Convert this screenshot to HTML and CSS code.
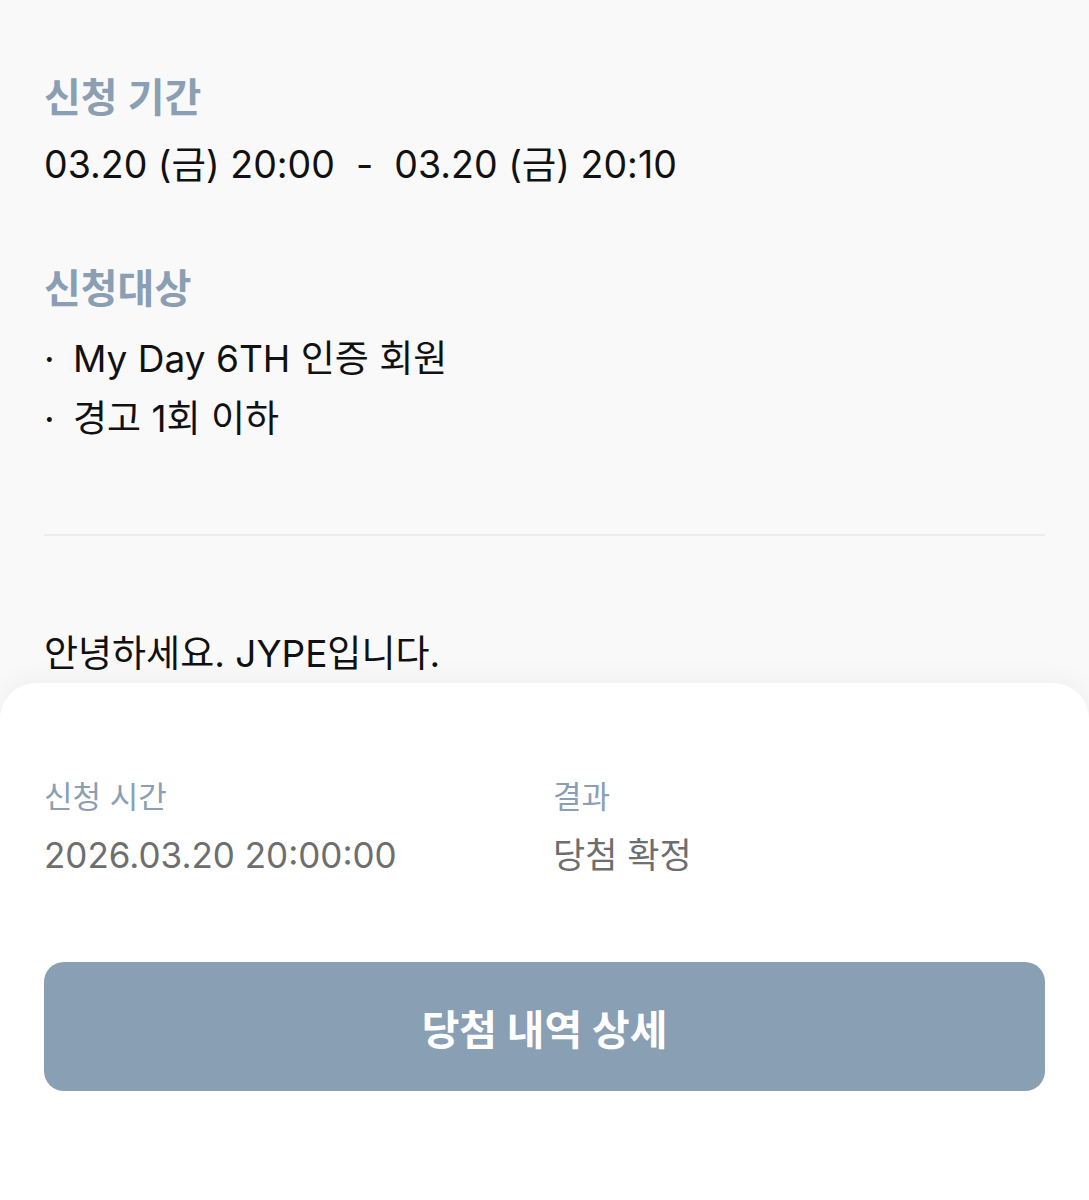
FILE: index.html
```html
<!DOCTYPE html>
<html lang="ko">
<head>
<meta charset="utf-8">
<link rel="stylesheet" href="styles.css">
</head>
<body>
<main class="content">
  <section class="block">
    <h2 class="block-title">신청 기간</h2>
    <p class="period">03.20 (금) 20:00&nbsp;&nbsp;-&nbsp;&nbsp;03.20 (금) 20:10</p>
  </section>
  <section class="block block-target">
    <h2 class="block-title">신청대상</h2>
    <ul class="target-list">
      <li>My Day 6TH 인증 회원</li>
      <li>경고 1회 이하</li>
    </ul>
  </section>
  <hr class="divider">
  <p class="greeting">안녕하세요. JYPE입니다.</p>
</main>
<section class="sheet">
  <div class="sheet-info">
    <div class="info-col">
      <div class="info-label">신청 시간</div>
      <div class="info-value">2026.03.20 20:00:00</div>
    </div>
    <div class="info-col">
      <div class="info-label">결과</div>
      <div class="info-value">당첨 확정</div>
    </div>
  </div>
  <button class="detail-btn" type="button">당첨 내역 상세</button>
</section>
</body>
</html>
```
FILE: styles.css
```css
* { box-sizing: border-box; }
html, body {
  margin: 0;
  padding: 0;
}
body {
  background: #f9f9f9;
  font-family: Inter, "Noto Sans CJK KR", sans-serif;
  color: #111;
  width: 1089px;
  height: 1200px;
  overflow: hidden;
  position: relative;
}
.content {
  padding: 69px 44px 0;
}
.block { margin: 0; }
.block-title {
  margin: 0;
  font-size: 40px;
  line-height: 1.45;
  font-weight: 600;
  color: #8a9fb4;
}
.period {
  margin: 11px 0 0;
  font-size: 37.5px;
  line-height: 1.45;
  color: #111;
}
.block-target { margin-top: 68px; }
.target-list {
  list-style: none;
  margin: 11px 0 0;
  padding: 0;
}
.target-list li {
  font-size: 37px;
  line-height: 60px;
  position: relative;
  padding-left: 29px;
}
.target-list li::before {
  content: "·";
  position: absolute;
  left: 0;
  top: 0;
}
.divider {
  margin: 85px 0 0;
  border: 0;
  height: 2px;
  background: #ececec;
}
.greeting {
  margin: 91px 0 0;
  font-size: 37px;
  line-height: 1.45;
}
.sheet {
  position: absolute;
  left: 0;
  right: 0;
  top: 683px;
  bottom: 0;
  background: #fff;
  border-radius: 36px 36px 0 0;
  box-shadow: 0 -6px 24px rgba(0, 0, 0, 0.04);
  padding: 92px 44px 0;
}
.sheet-info {
  display: grid;
  grid-template-columns: 509px 1fr;
}
.info-label {
  font-size: 31px;
  line-height: 1.4;
  color: #8a9fb4;
}
.info-value {
  margin-top: 13px;
  font-size: 35px;
  line-height: 1.4;
  color: #6e6e6e;
}
.detail-btn {
  display: block;
  width: 100%;
  height: 129px;
  margin-top: 82px;
  border: 0;
  border-radius: 20px;
  background: #899fb4;
  color: #fff;
  font-family: inherit;
  font-size: 41px;
  font-weight: 700;
}
```
